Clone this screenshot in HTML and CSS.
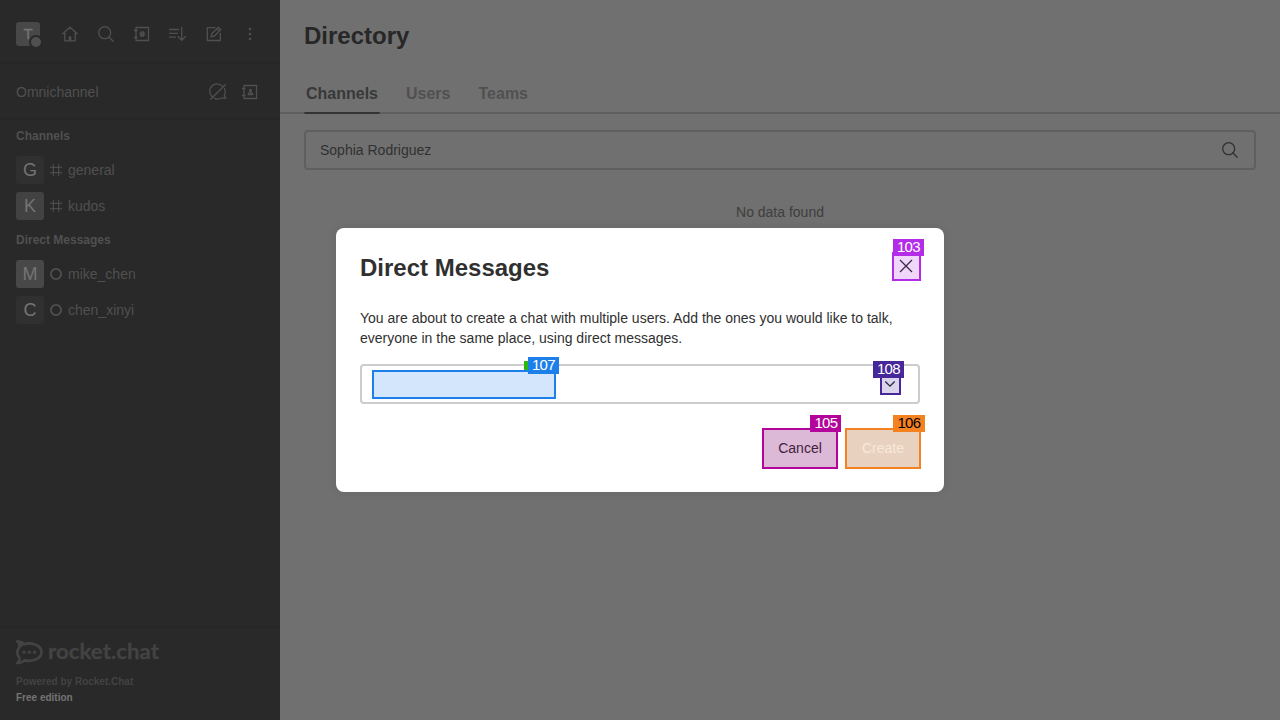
FILE: index.html
```html
<!DOCTYPE html>
<html lang="en">
<head>
<meta charset="utf-8">
<title>Directory</title>
<link rel="stylesheet" href="styles.css">
</head>
<body>
<div class="app">
  <aside class="sidebar">
    <header class="toolbar">
      <div class="avatar avatar-user">T<span class="presence"></span></div>
      <svg class="icon" viewBox="0 0 20 20"><path d="M2.800 9.800 10 3.200 17.200 9.800M4.800 8.700v8.100h10.400V8.700"/><path class="solid" d="M8.700 12.300h2.600v4.500H8.700z"/></svg>
      <svg class="icon" viewBox="0 0 20 20"><circle cx="8.700" cy="8.700" r="6"/><path d="m13 13 4.200 4.200"/></svg>
      <svg class="icon" viewBox="0 0 20 20"><path d="M4 3.500h12.500v13H4zM2.500 6.500h2.500M2.500 13.500h2.500M9.300 7.600v4.800M11.300 7.600v4.800M7.900 9.100h4.800M7.900 11.100h4.800"/></svg>
      <svg class="icon" viewBox="0 0 20 20"><path d="M1.500 5.500h9M1.500 9.300h8M1.500 13.100h6M13.700 3.500v12.500M10.200 12.800l3.500 3.400 3.500-3.400"/></svg>
      <svg class="icon" viewBox="0 0 20 20"><path d="M11 3.700H3.300v12.800h13V9.500M7.100 12.800l.8-3.300 6.500-6.300 2.400 2.400-6.400 6.400zM12.800 4.900l2.300 2.300"/></svg>
      <svg class="icon dots" viewBox="0 0 20 20"><circle cx="10" cy="5" r="1.300"/><circle cx="10" cy="10" r="1.300"/><circle cx="10" cy="15" r="1.300"/></svg>
    </header>
    <div class="omni">
      <span class="omni-title">Omnichannel</span>
      <svg class="icon" viewBox="0 0 20 20"><path d="M3.800 14.300A7.100 7.100 0 0 1 14.300 4.100M16.600 6.600c.9 2 .9 4.500-.3 6.700l1.600 3-4.200-.5a7.200 7.200 0 0 1-7.200.5M2.600 17.300 17.300 2.800"/></svg>
      <svg class="icon" viewBox="0 0 20 20"><path d="M4 3.500h12.500v13H4zM2.500 6.500h2.500M2.500 13.500h2.500M8.200 12.500c0-2.600 4.600-2.600 4.600 0z"/><circle cx="10.500" cy="8.500" r="1"/></svg>
    </div>
    <nav class="rooms">
      <h2 class="group">Channels</h2>
      <div class="room"><span class="avatar avatar-dark">G</span><svg class="kind" viewBox="0 0 16 16"><path d="M5.400 2v12M10.600 2v12M2 5.400h12M2 10.600h12"/></svg><span>general</span></div>
      <div class="room"><span class="avatar avatar-mid">K</span><svg class="kind" viewBox="0 0 16 16"><path d="M5.400 2v12M10.600 2v12M2 5.400h12M2 10.600h12"/></svg><span>kudos</span></div>
      <h2 class="group">Direct Messages</h2>
      <div class="room"><span class="avatar avatar-light">M</span><svg class="kind status" viewBox="0 0 16 16"><circle cx="8" cy="8" r="5.100"/></svg><span>mike_chen</span></div>
      <div class="room"><span class="avatar avatar-dark">C</span><svg class="kind status" viewBox="0 0 16 16"><circle cx="8" cy="8" r="5.100"/></svg><span>chen_xinyi</span></div>
    </nav>
    <footer class="footer">
      <svg class="logo" viewBox="0 -6 148 34">
        <path class="logo-line" d="M1.500 1.600c3-.4 5.200.7 6.800 2.500C15.500 2 25.500 5.300 25.500 12.300S15.500 22 8.300 20.400c-1.800 1.900-4 2.700-6.800 2.600 2.200-2.200 2.600-4 1.500-5.800C.8 14 .8 10.600 3 7.400c1.100-1.800.7-3.600-1.500-5.800z"/>
        <path class="logo-fill" d="M0 .8c4-1.200 7.500.3 9.300 3L4 8C3.800 4.900 2.700 3.200 0 1.800z"/>
        <circle class="logo-fill" cx="8.100" cy="12.200" r="1.650"/><circle class="logo-fill" cx="13.300" cy="12.200" r="1.650"/><circle class="logo-fill" cx="18.500" cy="12.200" r="1.650"/>
        <text class="logo-text" x="32" y="18.500" textLength="111" lengthAdjust="spacingAndGlyphs">rocket.chat</text>
      </svg>
      <div class="powered">Powered by Rocket.Chat</div>
      <div class="edition">Free edition</div>
    </footer>
  </aside>
  <main class="main">
    <h1 class="page-title">Directory</h1>
    <div class="tabs"><span class="tab tab-active">Channels</span><span class="tab">Users</span><span class="tab">Teams</span></div>
    <div class="search"><span>Sophia Rodriguez</span><svg class="icon search-icon" viewBox="0 0 20 20"><circle cx="8.700" cy="8.700" r="6"/><path d="m13 13 4.200 4.200"/></svg></div>
    <p class="empty">No data found</p>
  </main>
</div>
<section class="modal">
  <header class="modal-head">
    <h2 class="modal-title">Direct Messages</h2>
    <div class="mark mark-close"><svg class="close" viewBox="0 0 20 20"><path d="m4 4 12 12M16 4 4 16"/></svg><span class="tag">103</span></div>
  </header>
  <p class="modal-text">You are about to create a chat with multiple users. Add the ones you would like to talk, everyone in the same place, using direct messages.</p>
  <div class="field">
    <div class="mark mark-input"><span class="tag-behind"></span><span class="tag">107</span></div>
    <div class="mark mark-chevron"><svg class="chevron" viewBox="0 0 20 20"><path d="m5.300 7.500 4.700 4.700 4.700-4.700"/></svg><span class="tag">108</span></div>
  </div>
  <div class="actions">
    <div class="mark mark-cancel">Cancel<span class="tag">105</span></div>
    <div class="mark mark-create">Create<span class="tag">106</span></div>
  </div>
</section>
</body>
</html>
```
FILE: styles.css
```css
* { box-sizing: border-box; }
body { margin: 0; width: 1280px; height: 720px; overflow: hidden; font: 14px/20px "Liberation Sans", Arial, sans-serif; }
h1, h2, p { margin: 0; }
.app { display: flex; height: 720px; background: #707070; }
.sidebar { display: flex; flex-direction: column; width: 280px; background: #292929; color: #505050; }
.icon { display: block; width: 20px; height: 20px; fill: none; stroke: #505050; stroke-width: 1.3; stroke-linejoin: round; stroke-linecap: round; }
.solid { fill: #505050; stroke: none; }
.dots { fill: #505050; stroke: none; }
.toolbar { display: flex; align-items: center; gap: 16px; height: 64px; padding: 6px 20px 0 16px; border-bottom: 2px solid #262626; }
.avatar { display: flex; flex: none; align-items: center; justify-content: center; width: 28px; height: 28px; border-radius: 3px; color: #747474; font-size: 18px; }
.avatar-user { position: relative; width: 24px; height: 24px; margin-right: 4px; background: #484848; font-size: 15px; -webkit-text-stroke: .3px #747474; }
.presence { position: absolute; left: 13px; top: 13px; width: 14px; height: 14px; border: 2px solid #292929; border-radius: 50%; background: #505050; }
.avatar-dark { background: #303030; }
.avatar-mid { background: #424242; }
.avatar-light { background: #484848; }
.omni { display: flex; align-items: center; gap: 12px; height: 56px; padding: 2px 20px 0 16px; border-bottom: 2px solid #262626; }
.omni-title { flex: 1; }
.rooms { flex: 1; }
.group { height: 32px; padding-left: 16px; font-size: 12px; line-height: 32px; }
.room { display: flex; align-items: center; height: 36px; padding-left: 16px; }
.kind { width: 16px; height: 16px; margin: 0 4px; fill: none; stroke: #4a4a4a; stroke-width: 1.2; }
.status { stroke: #505050; stroke-width: 1.8; }
.footer { height: 94px; padding: 6px 16px 0; border-top: 2px solid #262626; font-size: 10px; font-weight: bold; line-height: 16px; }
.logo { display: block; width: 148px; height: 34px; margin-bottom: 6px; }
.logo-line { fill: none; stroke: #434343; stroke-width: 2.700; }
.logo-fill { fill: #434343; }
.logo-text { fill: #434343; stroke: #434343; stroke-width: .3px; font: bold 21px Lato, sans-serif; }
.powered { color: #434343; }
.edition { color: #747474; }
.main { flex: 1; color: #303030; }
.page-title { height: 72px; padding: 20px 24px 0; color: #272727; font-size: 24px; line-height: 32px; }
.tabs { display: flex; gap: 24px; height: 42px; padding: 0 24px; border-bottom: 2px solid #5f5f5f; }
.tab { height: 42px; padding: 0 2px; color: #505050; font-size: 16px; font-weight: bold; line-height: 43px; border-bottom: 2px solid transparent; }
.tab-active { color: #383838; border-color: #343434; border-radius: 2px; }
.search { display: flex; align-items: center; justify-content: space-between; height: 40px; margin: 16px 24px 0; padding: 0 14px; border: 2px solid #5f5f5f; border-radius: 4px; }
.search-icon { stroke: #303030; }
.empty { margin-top: 32px; color: #3e3e3e; text-align: center; }
.modal { position: absolute; left: 336px; top: 228px; width: 608px; height: 264px; padding: 24px; border-radius: 8px; background: #fff; color: #2f343d; box-shadow: 0 0 12px rgba(0,0,0,.08); }
.modal-head { display: flex; justify-content: space-between; height: 56px; }
.modal-title { font-size: 24px; line-height: 32px; color: #303030; }
.modal-text { color: #303030; }
.mark { position: relative; display: flex; align-items: center; justify-content: center; border: 2px solid; }
.mark-close { width: 29px; height: 29px; padding: 0 1px 1px 0; margin-right: -1px; border-color: #b32ce8; background: #f0d6fb; }
.close { flex: none; width: 20px; height: 20px; fill: none; stroke: #392b45; stroke-width: 1.3; }
.tag { position: absolute; width: 31px; height: 17px; color: #fff; font: 15px/15px "Liberation Sans", Arial, sans-serif; letter-spacing: -.6px; text-align: center; }
.mark-close .tag { left: -1px; top: -15px; background: #b32ce8; }
.field { display: flex; align-items: flex-start; justify-content: space-between; height: 40px; margin-top: 16px; padding: 4px 17px 0 10px; border: 2px solid #ccc; border-radius: 4px; }
.mark-input { width: 184px; height: 29px; border-color: #1d7fea; background: #d4e6fb; }
.mark-input .tag { left: 154px; top: -15px; background: #1d7fea; }
.tag-behind { position: absolute; left: 150px; top: -11px; width: 8px; height: 9px; background: #2fb510; }
.mark-chevron { width: 21px; height: 21px; padding: 0 1px 1px 0; margin-top: 4px; border-color: #46289a; background: #dad5ea; }
.mark-chevron .tag { left: -9px; top: -15px; background: #46289a; }
.chevron { flex: none; width: 20px; height: 20px; fill: none; stroke: #292548; stroke-width: 1.3; }
.actions { display: flex; justify-content: flex-end; gap: 7px; margin: 24px -1px 0 0; }
.mark-cancel, .mark-create { width: 76px; height: 41px; padding-bottom: 1px; }
.mark-cancel { border-color: #b3059b; background: #dcb9d6; color: #42223d; }
.mark-create { border-color: #f58220; background: #e8d2bf; color: #f8e8da; }
.mark-cancel .tag { left: 46px; top: -15px; padding-left: 1px; background: #b3059b; }
.mark-create .tag { left: 46px; top: -15px; width: 32px; background: #f58220; color: #000; }
```
